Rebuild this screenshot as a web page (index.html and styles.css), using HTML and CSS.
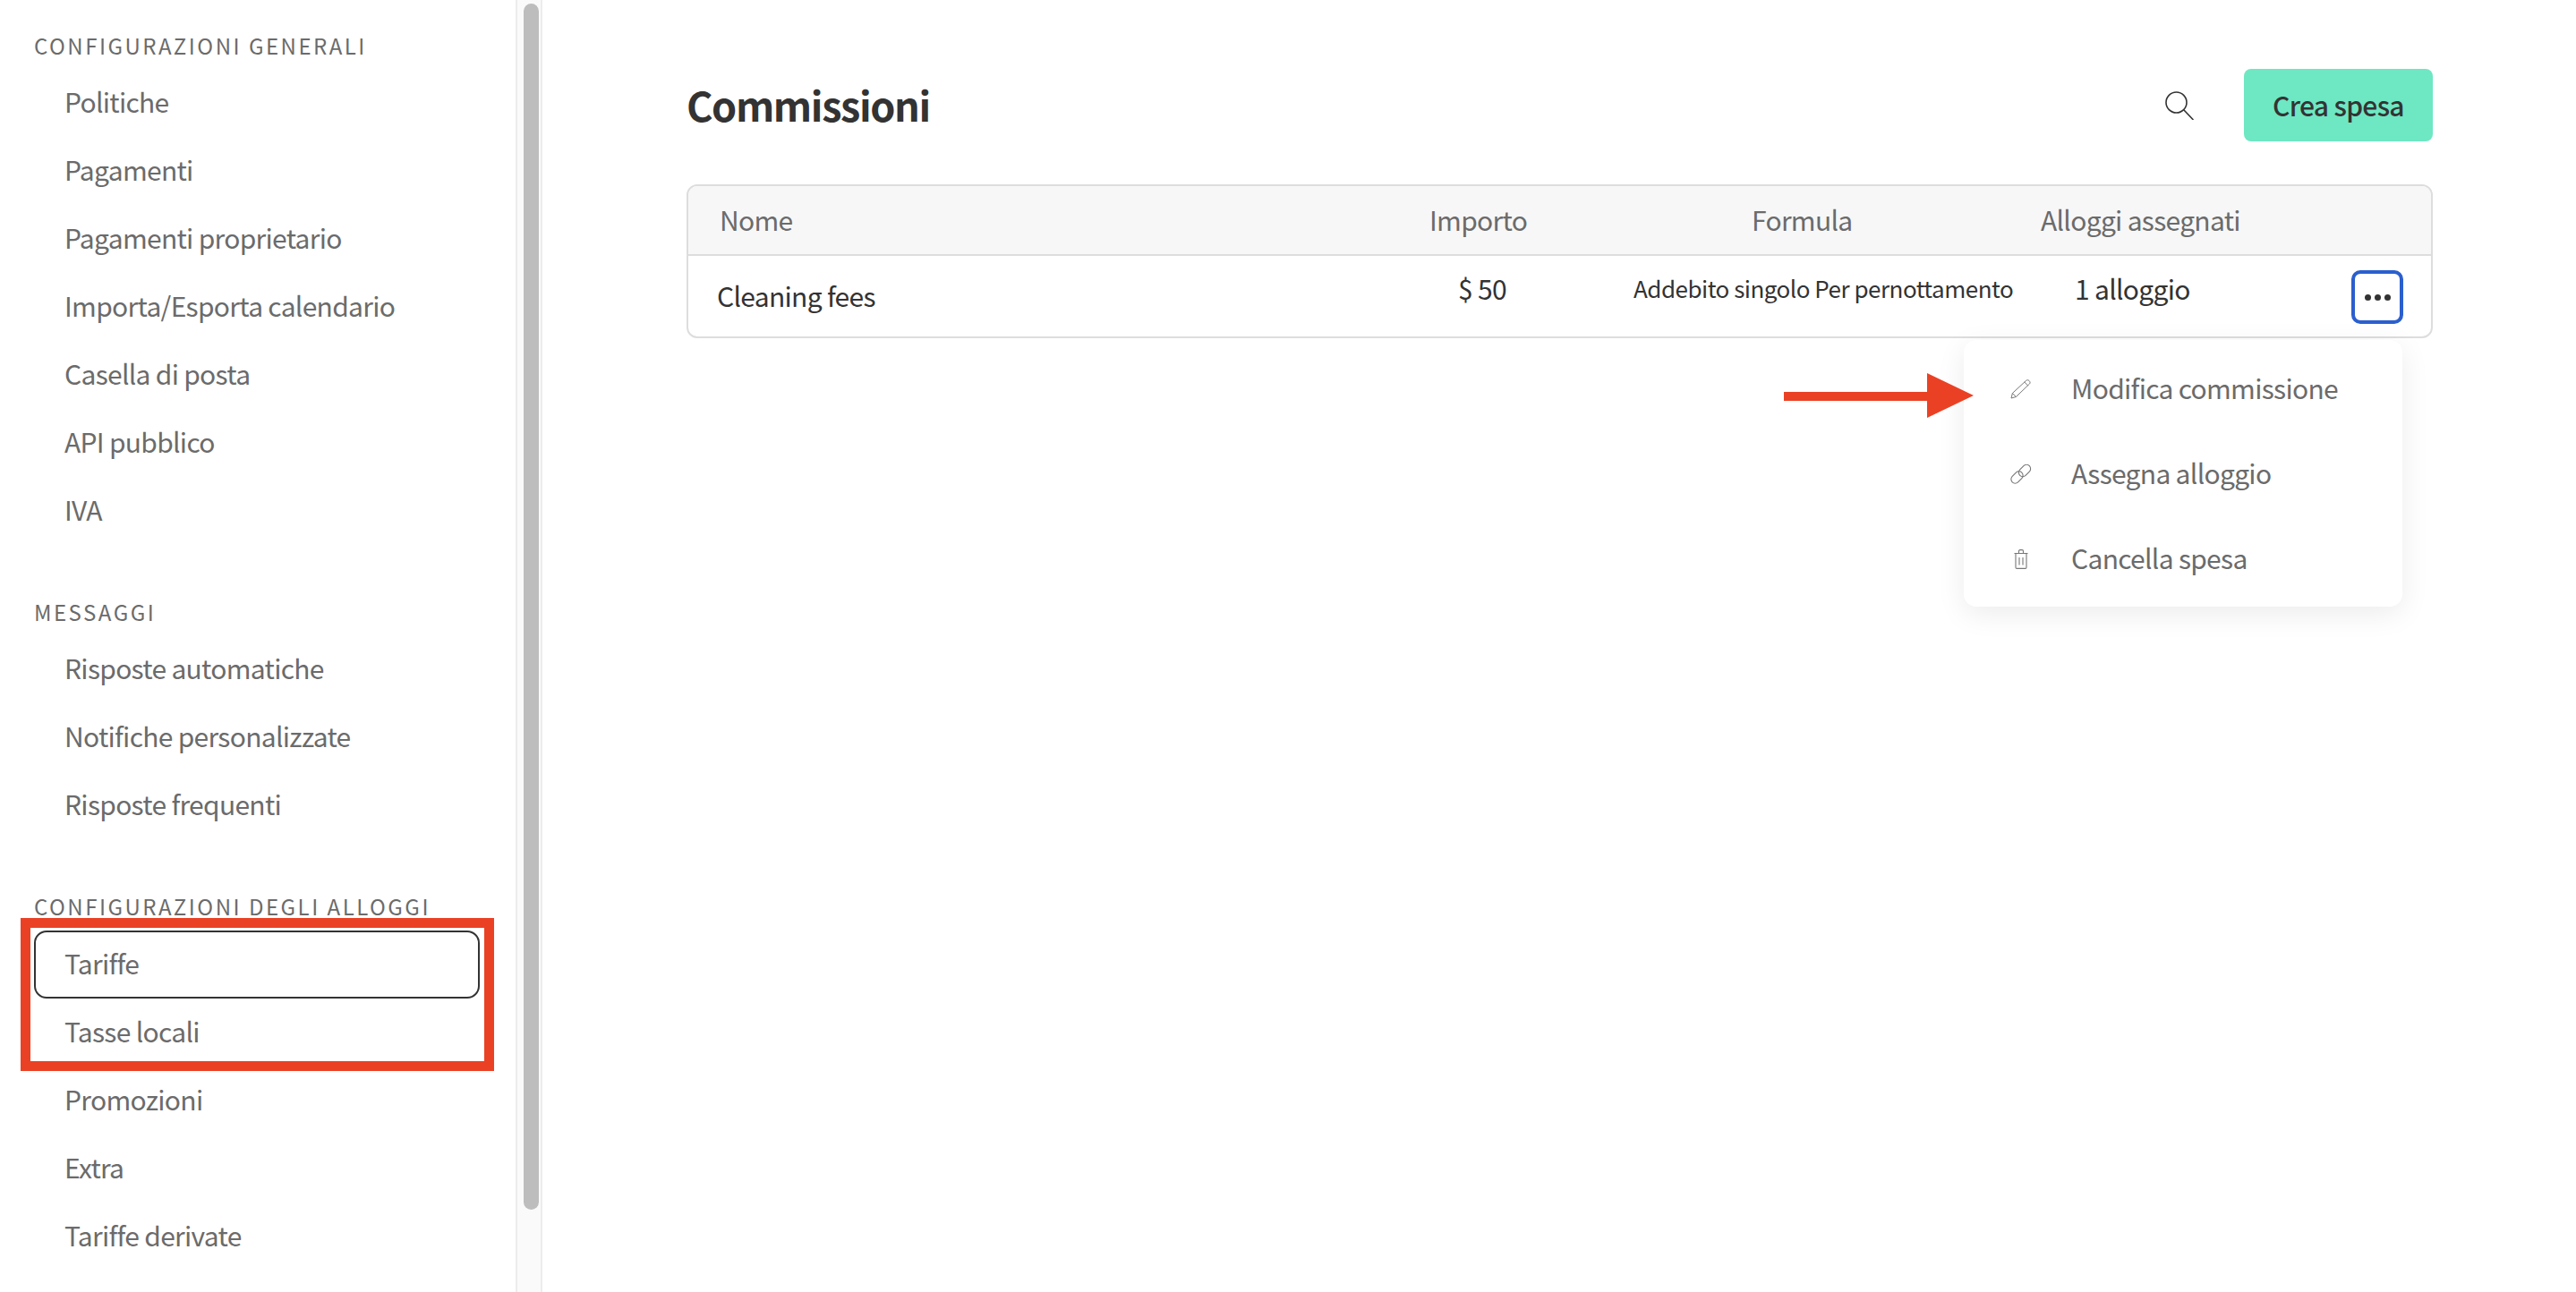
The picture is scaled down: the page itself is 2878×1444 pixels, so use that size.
FILE: index.html
```html
<!DOCTYPE html>
<html lang="it">
<head>
<meta charset="utf-8">
<title>Commissioni</title>
<link rel="stylesheet" href="styles.css">
</head>
<body>
<div class="page">
  <aside class="sidebar">
    <section class="nav-section nav-section-first">
      <h2 class="nav-label">CONFIGURAZIONI GENERALI</h2>
      <a class="nav-item">Politiche</a>
      <a class="nav-item">Pagamenti</a>
      <a class="nav-item">Pagamenti proprietario</a>
      <a class="nav-item">Importa/Esporta calendario</a>
      <a class="nav-item">Casella di posta</a>
      <a class="nav-item">API pubblico</a>
      <a class="nav-item">IVA</a>
    </section>
    <section class="nav-section nav-section-mid">
      <h2 class="nav-label">MESSAGGI</h2>
      <a class="nav-item">Risposte automatiche</a>
      <a class="nav-item">Notifiche personalizzate</a>
      <a class="nav-item">Risposte frequenti</a>
    </section>
    <section class="nav-section nav-section-last">
      <h2 class="nav-label">CONFIGURAZIONI DEGLI ALLOGGI</h2>
      <a class="nav-item nav-item-active">Tariffe</a>
      <a class="nav-item">Tasse locali</a>
      <a class="nav-item">Promozioni</a>
      <a class="nav-item">Extra</a>
      <a class="nav-item">Tariffe derivate</a>
    </section>
  </aside>
  <div class="scroll-track"><div class="scroll-thumb"></div></div>
  <main class="content">
    <header class="content-head">
      <h1 class="title">Commissioni</h1>
      <div class="head-actions">
        <svg class="search-icon" viewBox="0 0 32 32" fill="none" stroke="#333" stroke-width="1.6" stroke-linecap="round"><circle cx="12.5" cy="12.5" r="11.5"/><path d="M21 21l10 10.5"/></svg>
        <button class="create-btn">Crea spesa</button>
      </div>
    </header>
    <div class="table-wrap">
      <div class="table">
        <div class="table-head">
          <span>Nome</span><span>Importo</span><span>Formula</span><span>Alloggi assegnati</span>
        </div>
        <div class="table-row">
          <span class="cell-name">Cleaning fees</span>
          <span class="cell-amount">$ 50</span>
          <span class="cell-formula">Addebito singolo Per pernottamento</span>
          <span class="cell-count">1 alloggio</span>
          <button class="more-btn" aria-label="Altro"><i></i><i></i><i></i></button>
        </div>
      </div>
      <div class="menu">
        <div class="menu-item">
          <span class="menu-icon"><svg viewBox="0 0 24 22" fill="none" stroke="#777" stroke-width="1" stroke-linejoin="round"><path d="M1 21l1.400-5.500L17.600 1.400c1-.9 2.400-.9 3.500.2s1.300 2.500.3 3.500L6.400 19.500z"/><path d="M2.400 15.500l4 4M15.800 3.100l4.100 4"/></svg></span>
          <span class="menu-text">Modifica commissione</span>
        </div>
        <div class="menu-item">
          <span class="menu-icon"><svg viewBox="0 0 24 22" fill="none" stroke="#777" stroke-width="1.1"><rect x="-7.500" y="-4.500" width="15" height="9" rx="4.500" transform="translate(7.500 14.500) rotate(-45)"/><rect x="-7.500" y="-4.500" width="15" height="9" rx="4.500" transform="translate(16 7) rotate(-45)"/></svg></span>
          <span class="menu-text">Assegna alloggio</span>
        </div>
        <div class="menu-item">
          <span class="menu-icon"><svg class="trash" viewBox="0 0 16 22" fill="none" stroke="#777" stroke-width="1.1"><path d="M.5 4.500h15M5.500 4.500V2c0-.8.500-1.400 1.300-1.400h2.400c.8 0 1.300.6 1.300 1.400v2.500"/><path d="M2 4.500v15.700c0 .7.500 1.200 1.200 1.200h9.600c.7 0 1.200-.5 1.200-1.200V4.500"/><path d="M6 9v8.500M10 9v8.500"/></svg></span>
          <span class="menu-text">Cancella spesa</span>
        </div>
      </div>
    </div>
  </main>
  <div class="mark-box"></div>
  <svg class="mark-arrow" viewBox="0 0 212 50"><path d="M0 21h160V0l52 25-52 25V31H0z" fill="#ea4125"/></svg>
</div>
</body>
</html>
```
FILE: styles.css
```css
* { box-sizing: border-box; }
html, body { margin: 0; padding: 0; background: #fff; }
body {
  font-family: "Noto Sans CJK SC", "Noto Sans", sans-serif;
  color: #666;
  font-size: 30px;
  letter-spacing: -0.7px;
}
.page {
  position: relative;
  display: flex;
  width: 2878px;
  height: 1444px;
  overflow: hidden;
}
.sidebar {
  width: 576px;
  flex: none;
  padding: 36px 0 0 38px;
}
.nav-section-first { margin-bottom: 61px; }
.nav-section-mid { margin-bottom: 61px; }
.nav-label {
  margin: 0 0 10px;
  font-size: 24px;
  line-height: 30px;
  font-weight: 400;
  letter-spacing: 2.5px;
  color: #6b6b6b;
}
.nav-section-last .nav-label { margin-bottom: 12px; }
.nav-item {
  display: flex;
  align-items: center;
  width: 498px;
  height: 76px;
  padding: 0 0 2px 32px;
  border: 2px solid transparent;
  border-radius: 14px;
  line-height: 40px;
  color: #6b6b6b;
}
.nav-section-last .nav-item { padding-bottom: 4px; }
.nav-item-active { border-color: #333; }
.scroll-track {
  flex: none;
  width: 30px;
  padding: 4px 0 0 7px;
  background: #fafafa;
  border-left: 2px solid #ececec;
  border-right: 2px solid #ececec;
}
.scroll-thumb {
  width: 17px;
  height: 1348px;
  border-radius: 9px;
  background: #bdbdbd;
}
.content {
  flex: 1;
  padding: 77px 160px 0 161px;
}
.content-head {
  display: flex;
  justify-content: space-between;
  align-items: center;
  height: 81px;
  margin-bottom: 48px;
}
.title {
  margin: 0 0 2px;
  font-size: 45px;
  line-height: 60px;
  font-weight: 700;
  letter-spacing: -1.4px;
  color: #333;
}
.head-actions {
  display: flex;
  align-items: center;
  gap: 56px;
}
.search-icon { width: 32px; height: 32px; display: block; }
.create-btn {
  width: 211px;
  height: 81px;
  border: 0;
  border-radius: 8px;
  background: #6ee7c3;
  font: 500 30px/40px "Noto Sans CJK SC", "Noto Sans", sans-serif;
  letter-spacing: -0.7px;
  color: #333;
  padding: 0 0 2px;
}
.table-wrap { position: relative; }
.table {
  border: 2px solid #ddd;
  border-radius: 12px;
  overflow: hidden;
  height: 172px;
}
.table-head {
  display: grid;
  grid-template-columns: 828px 360px 323px 1fr;
  align-items: center;
  height: 78px;
  padding-bottom: 3px;
  background: #f7f7f7;
  border-bottom: 2px solid #ddd;
  line-height: 40px;
  color: #6b6b6b;
}
.table-head span:first-child { padding-left: 35px; }
.table-row {
  display: flex;
  align-items: center;
  height: 90px;
  color: #333;
  line-height: 40px;
}
.cell-name { width: 860px; flex: none; padding: 0 0 2px 32px; }
.cell-amount { width: 196px; flex: none; margin-top: -18px; }
.cell-formula { width: 493px; flex: none; font-size: 26px; letter-spacing: -0.5px; margin-top: -18px; white-space: nowrap; }
.cell-count { width: 309px; flex: none; margin-top: -18px; }
.more-btn {
  display: flex;
  align-items: center;
  justify-content: center;
  gap: 4px;
  width: 58px;
  height: 60px;
  margin-top: 2px;
  padding: 0;
  background: #fff;
  border: 4px solid #2b5fce;
  border-radius: 10px;
}
.more-btn i {
  width: 7px;
  height: 7px;
  border-radius: 50%;
  background: #333;
}
.menu {
  position: absolute;
  top: 174px;
  right: 34px;
  width: 490px;
  height: 298px;
  padding: 7px 0;
  background: #fff;
  border-radius: 14px;
  box-shadow: 0 8px 32px rgba(0, 0, 0, 0.08);
}
.menu-item {
  display: flex;
  align-items: center;
  height: 95px;
  padding-left: 52px;
  line-height: 40px;
  color: #6b6b6b;
}
.menu-text { padding-bottom: 4px; }
.menu-icon {
  display: flex;
  justify-content: center;
  width: 24px;
  margin-right: 44px;
}
.menu-icon svg { width: 24px; height: 22px; display: block; }
.menu-icon .trash { width: 16px; }
.mark-box {
  position: absolute;
  left: 23px;
  top: 1026px;
  width: 529px;
  height: 171px;
  border: 11px solid #ea4125;
}
.mark-arrow {
  position: absolute;
  left: 1993px;
  top: 417px;
  width: 212px;
  height: 50px;
}
```
